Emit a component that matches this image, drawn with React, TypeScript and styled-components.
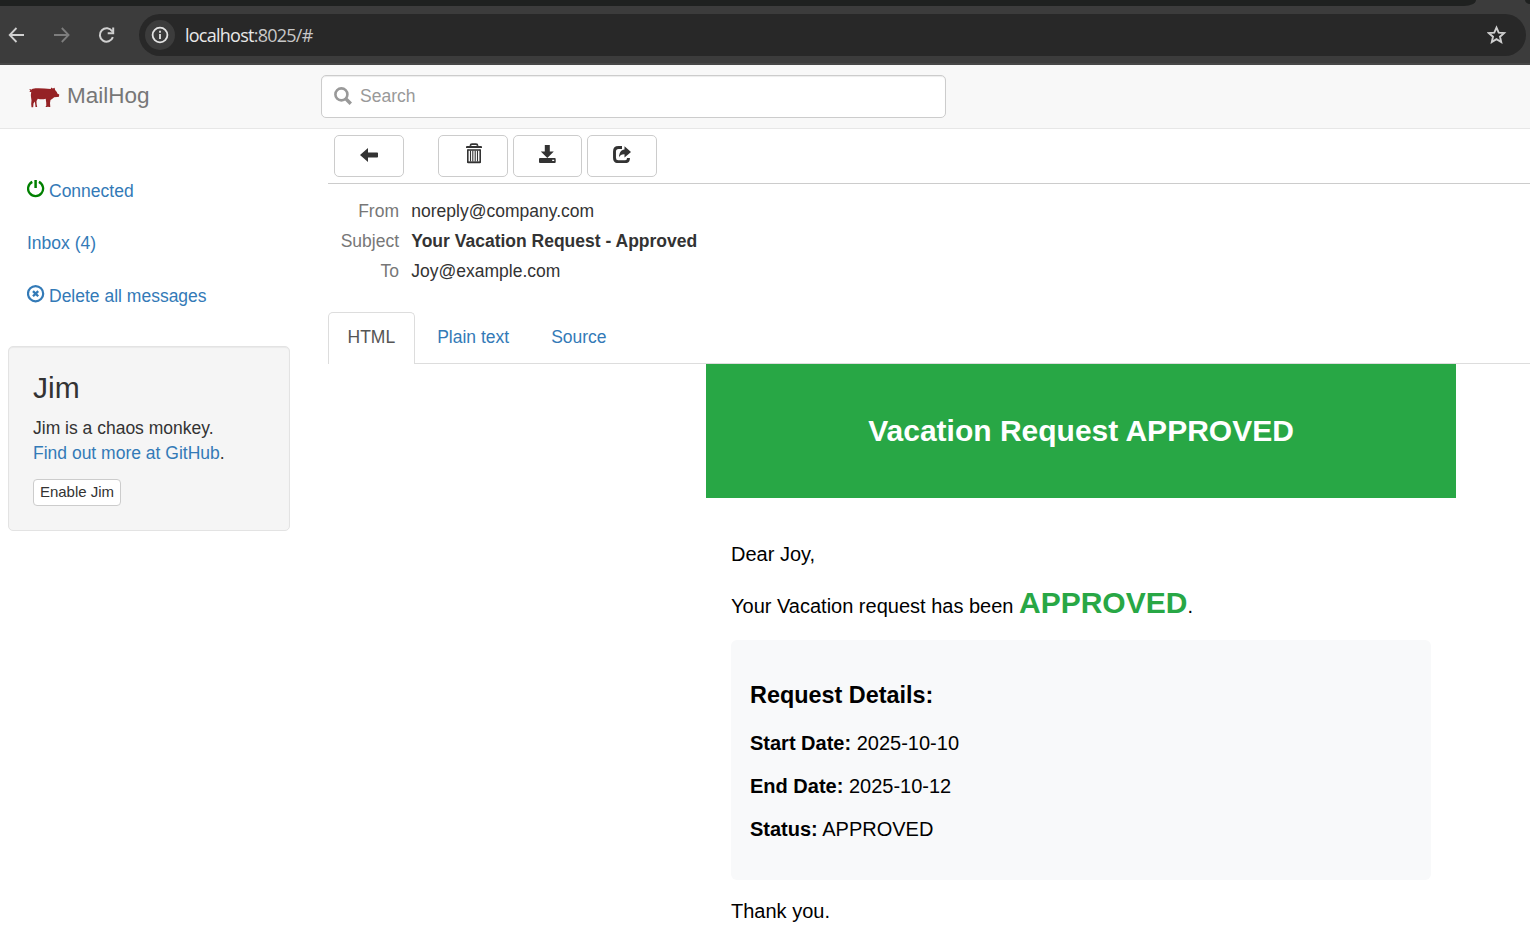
import React from "react";
import styled, { createGlobalStyle } from "styled-components";

const GlobalStyle = createGlobalStyle`
  * { box-sizing: border-box; }
  body {
    margin: 0;
    background: #fff;
    color: #333;
    font-family: "Liberation Sans", Arial, Helvetica, sans-serif;
    font-size: 17.5px;
    line-height: 25px;
    overflow: hidden;
  }
  h1, h2, h3, p { margin: 0; }
  svg { display: block; flex: none; }
`;

const Page = styled.div`
  width: 1530px;
  height: 944px;
  overflow: hidden;
  display: flex;
  flex-direction: column;
`;

const Chrome = styled.div`
  height: 65px;
  flex: none;
  background: #3c3c3c;
  border-bottom: 2px solid #474747;
  display: flex;
  flex-direction: column;
`;

const TabRow = styled.div`
  display: flex;
  justify-content: space-between;
  height: 6px;
`;

const TabStrip = styled.div`
  width: 1476px;
  height: 6px;
  background: #1f2120;
  border-bottom-right-radius: 14px 7px;
`;

const TabEdge = styled.div`
  width: 5px;
  height: 4px;
  background: #1f2120;
  border-bottom-left-radius: 5px 4px;
`;

const BrowserBar = styled.div`
  display: flex;
  align-items: center;
  height: 42px;
  margin-top: 8px;
  padding: 0 4px 0 8px;
`;

const NavIcons = styled.div`
  display: flex;
  gap: 27px;
  width: 131px;
  padding-bottom: 1px;
`;

const AddressBar = styled.div`
  flex: 1;
  height: 42px;
  border-radius: 21px;
  background: #282828;
  display: flex;
  align-items: center;
  padding: 0 19px 0 6px;
`;

const InfoBadge = styled.div`
  width: 30px;
  height: 30px;
  border-radius: 50%;
  background: #3c3c3c;
  display: grid;
  place-items: center;
`;

const Url = styled.div`
  flex: 1;
  padding-left: 10px;
  font: 18px/26px "Open Sans", "Noto Sans", sans-serif;
  letter-spacing: -0.75px;
  color: #c7c7c7;
  span { color: #e8e8e8; }
`;

const Navbar = styled.header`
  height: 64px;
  flex: none;
  background: #f8f8f8;
  border-bottom: 1px solid #e7e7e7;
  display: flex;
  align-items: flex-start;
`;

const Brand = styled.div`
  width: 321px;
  display: flex;
  align-items: center;
  gap: 7px;
  padding: 18px 0 0 29px;
  font-size: 22.5px;
  color: #777;
  svg { margin-top: 4px; }
`;

const SearchBox = styled.div`
  width: 625px;
  height: 43px;
  margin-top: 10px;
  border: 1px solid #ccc;
  border-radius: 5px;
  background: #fff;
  box-shadow: inset 0 1px 1px rgba(0, 0, 0, 0.075);
  display: flex;
  align-items: center;
  gap: 8px;
  padding: 0 12px;
  color: #999;
  svg { margin-top: -1px; }
`;

const Main = styled.div`
  flex: 1;
  display: flex;
`;

const Sidebar = styled.aside`
  width: 328px;
  padding: 50px 38px 0 8px;
`;

const SideLink = styled.a<{ $gap: number }>`
  display: flex;
  align-items: center;
  gap: 4px;
  height: 25px;
  padding-left: 19px;
  margin-bottom: ${(p) => p.$gap}px;
  color: #337ab7;
  svg { margin-top: -5px; }
`;

const Well = styled.section`
  width: 282px;
  height: 185px;
  padding: 24px;
  border: 1px solid #e3e3e3;
  border-radius: 5px;
  background: #f5f5f5;
  box-shadow: inset 0 1px 1px rgba(0, 0, 0, 0.05);
`;

const WellTitle = styled.h2`
  font-size: 30px;
  font-weight: 400;
  line-height: 33px;
  margin-bottom: 12px;
`;

const Link = styled.a`
  color: #337ab7;
`;

const SmallButton = styled.button`
  display: block;
  width: 88px;
  height: 27px;
  margin-top: 13px;
  padding: 0 0 2px;
  border: 1px solid #ccc;
  border-radius: 4px;
  background: #fff;
  color: #333;
  font: 15px/22px "Liberation Sans", Arial, sans-serif;
`;

const Content = styled.main`
  flex: 1;
  min-width: 0;
`;

const Toolbar = styled.div`
  height: 55px;
  padding: 6px 0 0 6px;
  border-bottom: 1px solid #ccc;
  display: flex;
`;

const ToolButton = styled.button<{ $width: number; $gap: number }>`
  width: ${(p) => p.$width}px;
  height: 42px;
  margin-right: ${(p) => p.$gap}px;
  padding: 0 0 4px;
  border: 1px solid #ccc;
  border-radius: 5px;
  background: #fff;
  display: grid;
  place-items: center;
`;

const Headers = styled.dl`
  margin: 0;
  height: 128px;
  padding-top: 12px;
  display: grid;
  grid-template-columns: 71px 1fr;
  grid-auto-rows: 30px;
  column-gap: 12.3px;
  line-height: 30px;
`;

const HeaderName = styled.dt`
  text-align: right;
  color: #777;
`;

const HeaderValue = styled.dd<{ $bold?: boolean }>`
  margin: 0;
  font-weight: ${(p) => (p.$bold ? 700 : 400)};
`;

const Tabs = styled.nav`
  height: 52px;
  border-bottom: 1px solid #ddd;
  display: flex;
  gap: 3px;
`;

const Tab = styled.a<{ $active?: boolean }>`
  height: 52px;
  padding: 12px 19px 0 ${(p) => (p.$active ? 18.5 : 18)}px;
  border: 1px solid ${(p) => (p.$active ? "#ddd" : "transparent")};
  border-bottom: 0;
  border-radius: 5px 5px 0 0;
  background: ${(p) => (p.$active ? "#fff" : "transparent")};
  color: ${(p) => (p.$active ? "#555" : "#337ab7")};
`;

const Mail = styled.article`
  width: 750px;
  margin-left: 378px;
  color: #000;
  font-size: 20px;
  line-height: 23px;
`;

const Banner = styled.h1`
  height: 134px;
  background: #28a745;
  color: #fff;
  font-size: 30px;
  line-height: 134px;
  text-align: center;
`;

const MailBody = styled.div`
  padding: 45px 25px 0;
`;

const Sentence = styled.p`
  margin: 19px 0 20px;
  line-height: 35px;
  height: 35px;
`;

const Status = styled.strong`
  color: #28a745;
  font-size: 30px;
`;

const Details = styled.section`
  height: 240px;
  padding: 42px 19px 0;
  border-radius: 6px;
  background: #f8f9fa;
  margin-bottom: 20px;
`;

const DetailsTitle = styled.h3`
  font-size: 23.4px;
  line-height: 27px;
  margin-bottom: 23px;
`;

const Detail = styled.p`
  margin-bottom: 20px;
`;

const LeftIcon = () => (
  <svg width="18" height="18" viewBox="0 0 18 18" fill="none" stroke="#d0d0d0" strokeWidth="1.8">
    <path d="M16 9H2M8.500 2L1.700 9l6.800 7" />
  </svg>
);
const RightIcon = () => (
  <svg width="18" height="18" viewBox="0 0 18 18" fill="none" stroke="#7d7d7d" strokeWidth="1.8">
    <path d="M1 9h14.500M8.800 2l6.800 7-6.800 7" />
  </svg>
);
const ReloadIcon = () => (
  <svg width="18" height="18" viewBox="0.3 0 18 18" fill="none" stroke="#d0d0d0" strokeWidth="2">
    <path d="M15.200 11.200A6.700 6.700 0 1 1 14.600 5.500M15.500 1.500v5.700H10" />
  </svg>
);
const InfoIcon = () => (
  <svg width="18" height="18" viewBox="0 0 18 18" fill="none" stroke="#e3e3e3" strokeWidth="1.8">
    <circle cx="9" cy="9" r="7.400" />
    <path d="M9 8v5M9 4.800v1.900" />
  </svg>
);
const StarIcon = () => (
  <svg width="20" height="20" viewBox="0.5 0 20 20" fill="none" stroke="#cfcfcf" strokeWidth="1.9">
    <path d="M10 2.600l2.200 5 5.400.5-4.100 3.600 1.200 5.400-4.700-2.900-4.700 2.900 1.200-5.400L2.400 8.100l5.400-.5z" />
  </svg>
);
const PigLogo = () => (
  <svg width="31" height="21" viewBox="0 0 31 21" fill="#952225">
    <path d="M.3 2.300L1.500 1.900 2 3l1-.9C4.500 1.300 7 1.200 9.500 1.300c4 .1 8 .6 12.200.7l.5-1.500 1.600.9L25.600.7l.5 2.400 1.700 2 .5 1.500 1.900.8-.2 2.300-1.800.3-3 .2-1.800 1.500-1.900 1.200-.5 3 .3 4.100h-2l-.3-.9-.3.900h-2.200l.8-1.500-.1-3-.5-3.700c-2.600.8-5.400.7-7.900 0l-1.300 2.200.1 3 .6 3H6.500l-.3-3-.5-2.400-1.200 1.800-.3 3.900H2.500l-.3-3.300.3-3.500-.5-3.400c-.3-2 0-3.700.3-5.300C1.500 5.300.5 5.200.4 4.300l1-.3z" />
  </svg>
);
const SearchIcon = () => (
  <svg width="18" height="18" viewBox="0 0 18 18" fill="none" stroke="#999">
    <circle cx="7.400" cy="7.400" r="6" strokeWidth="2.600" />
    <path d="M11.800 11.800l5 5" strokeWidth="3.400" />
  </svg>
);
const PowerIcon = () => (
  <svg width="18" height="18" viewBox="0.4 0.500 18 18" fill="none" stroke="green" strokeWidth="2.300">
    <path d="M5.700 2.400A7.500 7.500 0 1 0 12.300 2.400" />
    <path d="M9 0.500v8" strokeWidth="2.500" />
  </svg>
);
const RemoveIcon = () => (
  <svg width="18" height="18" viewBox="0.4 0.300 18 18" fill="none" stroke="#337ab7" strokeWidth="2.200">
    <circle cx="9" cy="9" r="7.600" />
    <path d="M6.400 6.400l5.200 5.200M11.600 6.400l-5.200 5.200" strokeWidth="2.300" />
  </svg>
);
const ArrowIcon = () => (
  <svg width="18" height="18" viewBox="0 -1 18 18" fill="#333">
    <path d="M0 9l8-7v4.500h9.200q.8 0 .8.800v3.400q0 .8-.8.800H8V16z" />
  </svg>
);
const TrashIcon = () => (
  <svg width="18" height="20" viewBox="-1 1.500 18 20" fill="none" stroke="#333" overflow="visible">
    <path d="M5.300 3.400Q5.500 1.700 7 1.700h4q1.500 0 1.700 1.700" strokeWidth="1.700" />
    <path d="M1 5.600V4.500q0-1 1-1h14q1 0 1 1v1.100z" fill="#333" stroke="none" />
    <path d="M2.800 7v12.600q0 .4.400.4h11.600q.4 0 .4-.4V7" strokeWidth="1.600" />
    <path d="M2.500 7.500h13M2.500 19.700h13" strokeWidth="1.600" />
    <path d="M5.500 8v11M7.800 8v11M10.200 8v11M12.500 8v11" strokeWidth="1.100" />
  </svg>
);
const DownloadIcon = () => (
  <svg width="18" height="18" viewBox="0.8 0 18 18" fill="#333">
    <path d="M6.600 0h5v6.500h4L9.100 13 2.600 6.500h4z" />
    <path d="M.800 14q0-1 1-1h14.700q1 0 1 1v3q0 1-1 1H1.800q-1 0-1-1zM14 14.800v1.200h2v-1.200z" fillRule="evenodd" />
  </svg>
);
const ShareIcon = () => (
  <svg width="18" height="18" viewBox="0 -0.7 18 18" fill="none" stroke="#333">
    <path d="M9 1.800H5.500Q1.500 1.800 1.500 5.800v6.200q0 4 3.700 4h7q3.300 0 3.300-3.700" strokeWidth="2.900" />
    <path d="M11.500.5L18 6.300l-6.500 5.500V8.600C8.500 8.500 7.200 9.700 6 11.500 6.300 7 8 4 11.500 3.800z" fill="#333" stroke="none" />
  </svg>
);

const tools = [
  { label: "Back", Icon: ArrowIcon, width: 70, gap: 34 },
  { label: "Delete", Icon: TrashIcon, width: 70, gap: 5 },
  { label: "Download", Icon: DownloadIcon, width: 69, gap: 5 },
  { label: "Release", Icon: ShareIcon, width: 70, gap: 0 },
];

const details = [
  ["Start Date:", "2025-10-10"],
  ["End Date:", "2025-10-12"],
  ["Status:", "APPROVED"],
];

export default function App() {
  return (
    <Page>
      <GlobalStyle />
      <Chrome>
        <TabRow><TabStrip /><TabEdge /></TabRow>
        <BrowserBar>
          <NavIcons><LeftIcon /><RightIcon /><ReloadIcon /></NavIcons>
          <AddressBar>
            <InfoBadge><InfoIcon /></InfoBadge>
            <Url><span>localhost</span>:8025/#</Url>
            <StarIcon />
          </AddressBar>
        </BrowserBar>
      </Chrome>
      <Navbar>
        <Brand><PigLogo />MailHog</Brand>
        <SearchBox><SearchIcon />Search</SearchBox>
      </Navbar>
      <Main>
        <Sidebar>
          <SideLink $gap={27}><PowerIcon />Connected</SideLink>
          <SideLink $gap={28}>Inbox (4)</SideLink>
          <SideLink $gap={37}><RemoveIcon />Delete all messages</SideLink>
          <Well>
            <WellTitle>Jim</WellTitle>
            <p>Jim is a chaos monkey.<br /><Link>Find out more at GitHub</Link>.</p>
            <SmallButton>Enable Jim</SmallButton>
          </Well>
        </Sidebar>
        <Content>
          <Toolbar>
            {tools.map(({ label, Icon, width, gap }) => (
              <ToolButton key={label} aria-label={label} $width={width} $gap={gap}><Icon /></ToolButton>
            ))}
          </Toolbar>
          <Headers>
            <HeaderName>From</HeaderName><HeaderValue>noreply@company.com</HeaderValue>
            <HeaderName>Subject</HeaderName><HeaderValue $bold>Your Vacation Request - Approved</HeaderValue>
            <HeaderName>To</HeaderName><HeaderValue>Joy@example.com</HeaderValue>
          </Headers>
          <Tabs>
            <Tab $active>HTML</Tab>
            <Tab>Plain text</Tab>
            <Tab>Source</Tab>
          </Tabs>
          <Mail>
            <Banner>Vacation Request APPROVED</Banner>
            <MailBody>
              <p>Dear Joy,</p>
              <Sentence>Your Vacation request has been <Status>APPROVED</Status>.</Sentence>
              <Details>
                <DetailsTitle>Request Details:</DetailsTitle>
                {details.map(([name, value]) => (
                  <Detail key={name}><strong>{name}</strong> {value}</Detail>
                ))}
              </Details>
              <p>Thank you.</p>
            </MailBody>
          </Mail>
        </Content>
      </Main>
    </Page>
  );
}
